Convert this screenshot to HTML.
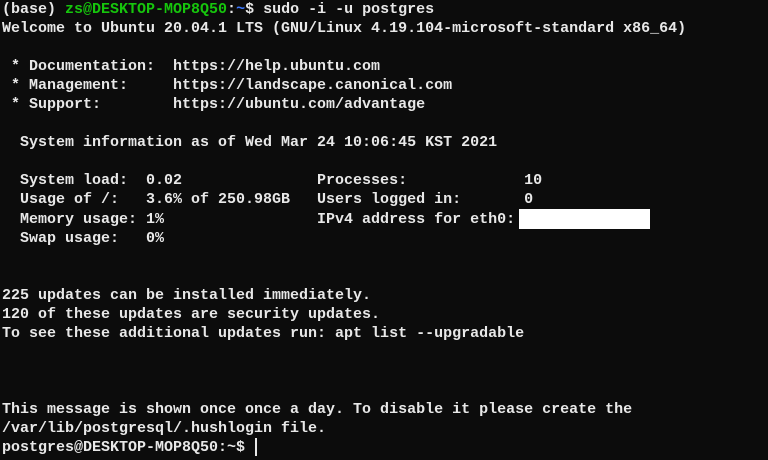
<!DOCTYPE html>
<html><head><style>
html,body{margin:0;padding:0;background:#0c0c0c;width:768px;height:460px;overflow:hidden}
pre{margin:0;position:absolute;left:2px;top:0px;font-family:"Liberation Mono",monospace;font-size:15px;line-height:19.05px;color:#e8e8e8;font-weight:bold;white-space:pre}
.g{color:#16c60c}.b{color:#3b78ff}
.box{position:absolute;left:519px;top:209px;width:131px;height:20px;background:#fff}
.cur{position:absolute;left:255px;top:438px;width:2px;height:18px;background:#e8e8e8}
</style></head><body>
<pre>(base) <span class="g">zs@DESKTOP-MOP8Q50</span>:<span class="b">~</span>$ sudo -i -u postgres
Welcome to Ubuntu 20.04.1 LTS (GNU/Linux 4.19.104-microsoft-standard x86_64)

 * Documentation:  https://help.ubuntu.com
 * Management:     https://landscape.canonical.com
 * Support:        https://ubuntu.com/advantage

  System information as of Wed Mar 24 10:06:45 KST 2021

  System load:  0.02               Processes:             10
  Usage of /:   3.6% of 250.98GB   Users logged in:       0
  Memory usage: 1%                 IPv4 address for eth0:
  Swap usage:   0%


225 updates can be installed immediately.
120 of these updates are security updates.
To see these additional updates run: apt list --upgradable



This message is shown once once a day. To disable it please create the
/var/lib/postgresql/.hushlogin file.
postgres@DESKTOP-MOP8Q50:~$ </pre>
<div class="box"></div><div class="cur"></div>
</body></html>
